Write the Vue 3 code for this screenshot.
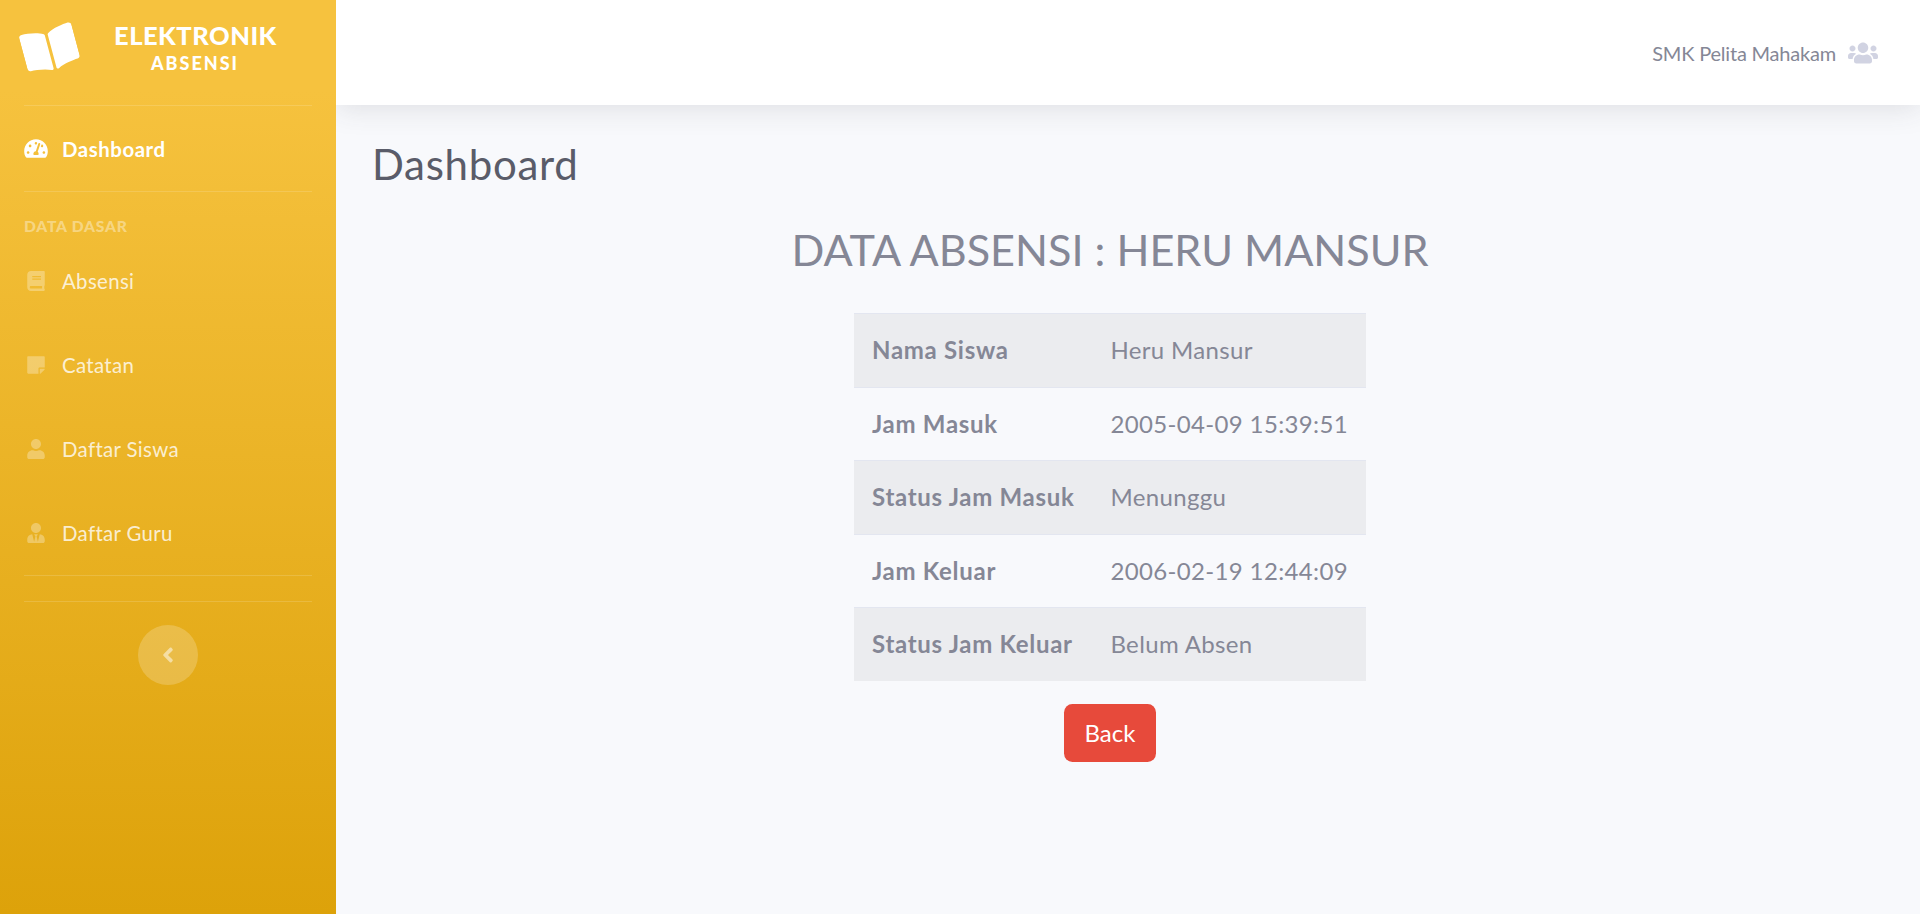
<script setup>
const icons = {
  book: { vb: '0 0 448 512', d: 'M448 360V24c0-13.3-10.7-24-24-24H96C43 0 0 43 0 96v320c0 53 43 96 96 96h328c13.3 0 24-10.7 24-24v-16c0-7.5-3.5-14.3-8.9-18.7-4.2-15.4-4.2-59.3 0-74.7 5.4-4.3 8.9-11.1 8.9-18.6zM128 134c0-3.3 2.7-6 6-6h212c3.3 0 6 2.7 6 6v20c0 3.3-2.7 6-6 6H134c-3.3 0-6-2.7-6-6v-20zm0 64c0-3.3 2.7-6 6-6h212c3.3 0 6 2.7 6 6v20c0 3.3-2.7 6-6 6H134c-3.3 0-6-2.7-6-6v-20zm253.4 250H96c-17.7 0-32-14.3-32-32 0-17.6 14.4-32 32-32h285.4c-1.9 17.1-1.9 46.9 0 64z' },
  note: { vb: '0 0 448 512', d: 'M312 320h136V56c0-13.3-10.7-24-24-24H24C10.7 32 0 42.7 0 56v400c0 13.3 10.7 24 24 24h264V344c0-13.2 10.8-24 24-24zm129 55l-98 98c-4.5 4.5-10.6 7-17 7h-6V352h128v6.1c0 6.3-2.5 12.4-7 16.9z' },
  user: { vb: '0 0 448 512', d: 'M224 256c70.7 0 128-57.3 128-128S294.7 0 224 0 96 57.3 96 128s57.3 128 128 128zm89.6 32h-16.7c-22.2 10.2-46.9 16-72.9 16s-50.6-5.8-72.9-16h-16.7C60.2 288 0 348.2 0 422.4V464c0 26.5 21.5 48 48 48h352c26.5 0 48-21.5 48-48v-41.6c0-74.2-60.2-134.4-134.4-134.4z' },
  tie: { vb: '0 0 448 512', d: 'M224 256c70.7 0 128-57.3 128-128S294.7 0 224 0 96 57.3 96 128s57.3 128 128 128zm95.8 32.6L272 480l-32-136 32-56h-96l32 56-32 136-47.8-191.4C56.9 292 0 350.3 0 422.4V464c0 26.5 21.5 48 48 48h352c26.5 0 48-21.5 48-48v-41.6c0-72.1-56.9-130.4-128.2-133.8z' }
}

const navItems = [
  { label: 'Absensi', icon: icons.book },
  { label: 'Catatan', icon: icons.note },
  { label: 'Daftar Siswa', icon: icons.user },
  { label: 'Daftar Guru', icon: icons.tie }
]

const rows = [
  { label: 'Nama Siswa', value: 'Heru Mansur' },
  { label: 'Jam Masuk', value: '2005-04-09 15:39:51' },
  { label: 'Status Jam Masuk', value: 'Menunggu' },
  { label: 'Jam Keluar', value: '2006-02-19 12:44:09' },
  { label: 'Status Jam Keluar', value: 'Belum Absen' }
]
</script>

<template>
  <div class="wrapper">
    <!-- Sidebar -->
    <aside class="sidebar">
      <div class="brand">
        <svg class="brand-icon" viewBox="0 0 576 512" aria-hidden="true">
          <path fill="currentColor" d="M542.22 32.05c-54.8 3.11-163.72 14.43-230.96 55.59-4.64 2.84-7.27 7.89-7.27 13.17v363.87c0 11.55 12.63 18.85 23.28 13.49 69.18-34.82 169.23-44.32 218.7-46.92 16.89-.89 30.02-14.43 30.02-30.66V62.75c.01-17.71-15.35-31.74-33.77-30.7zM264.73 87.64C197.5 46.48 88.58 35.17 33.78 32.05 15.36 31.01 0 45.04 0 62.75V400.6c0 16.24 13.13 29.78 30.02 30.67 49.49 2.6 149.59 12.11 218.77 46.95 10.62 5.35 23.21-1.94 23.21-13.46V100.63c0-5.29-2.62-10.1-7.27-12.99z"/>
        </svg>
        <div class="brand-text">
          <div class="brand-main">ELEKTRONIK</div>
          <div class="brand-sub">ABSENSI</div>
        </div>
      </div>
      <hr class="divider" />
      <a class="nav-link nav-active">
        <svg class="nav-icon" viewBox="0 0 576 512" aria-hidden="true">
          <path fill="currentColor" d="M288 32C128.94 32 0 160.94 0 320c0 52.8 14.25 102.26 39.06 144.8 5.61 9.62 16.3 15.2 27.44 15.2h443c11.14 0 21.83-5.58 27.44-15.2C561.75 422.26 576 372.8 576 320c0-159.06-128.94-288-288-288zm0 64c14.71 0 26.58 10.13 30.32 23.65-1.11 2.26-2.64 4.23-3.45 6.67l-9.22 27.67c-5.13 3.49-10.97 6.01-17.64 6.01-17.67 0-32-14.33-32-32S270.33 96 288 96zM96 384c-17.67 0-32-14.33-32-32s14.33-32 32-32 32 14.33 32 32-14.33 32-32 32zm48-160c-17.67 0-32-14.33-32-32s14.33-32 32-32 32 14.33 32 32-14.33 32-32 32zm246.77-72.41l-61.33 184C343.13 347.33 352 364.54 352 384c0 11.72-3.38 22.55-8.88 32H232.88c-5.5-9.45-8.88-20.28-8.88-32 0-33.94 26.5-61.43 59.9-63.59l61.34-184.01c4.17-12.56 17.73-19.45 30.36-15.17 12.57 4.19 19.35 17.77 15.17 30.36zm14.66 57.2l15.52-46.55c3.47-1.29 7.13-2.23 11.05-2.23 17.67 0 32 14.33 32 32s-14.33 32-32 32c-11.38-.01-20.89-6.28-26.57-15.22zM480 384c-17.67 0-32-14.33-32-32s14.33-32 32-32 32 14.33 32 32-14.33 32-32 32z"/>
        </svg>
        <span>Dashboard</span>
      </a>
      <hr class="divider" />
      <div class="side-heading">DATA DASAR</div>
      <a v-for="item in navItems" :key="item.label" class="nav-link">
        <svg class="nav-icon nav-icon-dim" :viewBox="item.icon.vb" aria-hidden="true">
          <path fill="currentColor" :d="item.icon.d"/>
        </svg>
        <span>{{ item.label }}</span>
      </a>
      <hr class="divider" />
      <div class="side-gap"></div>
      <hr class="divider" />
      <div class="toggle-row">
        <button class="toggle" aria-label="Toggle sidebar">
          <svg viewBox="0 0 256 512" aria-hidden="true">
            <path fill="currentColor" d="M31.7 239l136-136c9.4-9.4 24.6-9.4 33.9 0l22.6 22.6c9.4 9.4 9.4 24.6 0 33.9L127.9 256l96.4 96.4c9.4 9.4 9.4 24.6 0 33.9L201.7 409c-9.4 9.4-24.6 9.4-33.9 0l-136-136c-9.5-9.4-9.5-24.6-.1-34z"/>
          </svg>
        </button>
      </div>
    </aside>

    <!-- Main -->
    <div class="content">
      <header class="topbar">
        <span class="top-name">SMK Pelita Mahakam</span>
        <svg class="top-icon" viewBox="0 0 640 512" aria-hidden="true">
          <path fill="currentColor" d="M96 224c35.3 0 64-28.7 64-64s-28.7-64-64-64-64 28.7-64 64 28.7 64 64 64zm448 0c35.3 0 64-28.7 64-64s-28.7-64-64-64-64 28.7-64 64 28.7 64 64 64zm32 32h-64c-17.6 0-33.5 7.1-45.1 18.6 40.3 22.1 68.9 62 75.1 109.4h66c17.7 0 32-14.3 32-32v-32c0-35.3-28.7-64-64-64zm-256 0c61.9 0 112-50.1 112-112S381.9 32 320 32 208 82.1 208 144s50.1 112 112 112zm76.8 32h-8.3c-20.8 10-43.9 16-68.5 16s-47.6-6-68.5-16h-8.3C179.6 288 128 339.6 128 403.2V432c0 26.5 21.5 48 48 48h288c26.5 0 48-21.5 48-48v-28.8c0-63.6-51.6-115.2-115.2-115.2zm-223.7-13.4C161.5 263.1 145.6 256 128 256H64c-35.3 0-64 28.7-64 64v32c0 17.7 14.3 32 32 32h65.9c6.3-47.4 34.9-87.3 75.2-109.4z"/>
        </svg>
      </header>

      <main class="page">
        <h1 class="page-title">Dashboard</h1>
        <div class="detail">
          <h2 class="detail-title">DATA ABSENSI : HERU MANSUR</h2>
          <table class="detail-table">
            <tbody>
              <tr v-for="row in rows" :key="row.label">
                <th>{{ row.label }}</th>
                <td>{{ row.value }}</td>
              </tr>
            </tbody>
          </table>
          <button class="btn-back">Back</button>
        </div>
      </main>
    </div>
  </div>
</template>

<style>
html, body { margin: 0; padding: 0; }
</style>

<style scoped>
.wrapper {
  display: flex;
  height: 914px;
  overflow: hidden;
  background: #f8f9fc;
  font-family: Lato, "Open Sans", "Noto Sans", sans-serif;
  color: #858796;
}

/* Sidebar */
.sidebar {
  position: relative;
  z-index: 1;
  width: 336px;
  flex-shrink: 0;
  display: flex;
  flex-direction: column;
  background: linear-gradient(180deg, #f6c23e 10%, #dda20a 100%);
  color: #fff;
}
.brand {
  height: 105px;
  flex-shrink: 0;
  display: flex;
  align-items: flex-start;
  box-sizing: border-box;
  padding: 22px 0 0 23px;
}
.brand-icon {
  width: 54px;
  height: 48px;
  margin-top: 3px;
  transform: rotate(-15deg);
  flex-shrink: 0;
}
.brand-text {
  width: 162px;
  margin-left: 37px;
  text-align: center;
  font-weight: 800;
}
.brand-main {
  font-size: 25.5px;
  line-height: 26px;
  font-weight: 900;
  letter-spacing: 0.5px;
}
.brand-sub {
  font-size: 18px;
  line-height: 22px;
  margin-top: 4px;
  font-weight: 900;
  letter-spacing: 2px;
}
.divider {
  height: 0;
  margin: 0 24px;
  border: 0;
  border-top: 1px solid rgba(255, 255, 255, 0.15);
  flex-shrink: 0;
}
.nav-link {
  height: 84px;
  flex-shrink: 0;
  display: flex;
  align-items: center;
  padding-left: 27px;
  font-size: 20.4px;
  letter-spacing: 0.35px;
  color: rgba(255, 255, 255, 0.8);
}
.nav-active {
  height: 85px;
  padding-left: 24px;
  color: #fff;
  font-weight: 700;
  letter-spacing: 0.55px;
}
.nav-icon {
  width: 18px;
  height: 20px;
  margin-right: 17px;
  flex-shrink: 0;
}
.nav-active .nav-icon {
  width: 24px;
  height: 21px;
  margin-right: 14px;
}
.nav-icon-dim { color: rgba(255, 255, 255, 0.3); }
.side-heading {
  height: 47px;
  flex-shrink: 0;
  box-sizing: border-box;
  padding: 24px 0 0 24px;
  font-size: 15.6px;
  line-height: 20px;
  font-weight: 900;
  letter-spacing: 0.8px;
  color: rgba(255, 255, 255, 0.4);
}
.side-gap { height: 25px; flex-shrink: 0; }
.toggle-row {
  display: flex;
  justify-content: center;
  padding-top: 23px;
}
.toggle {
  width: 60px;
  height: 60px;
  padding: 0;
  display: flex;
  align-items: center;
  justify-content: center;
  border: 0;
  border-radius: 50%;
  background: rgba(255, 255, 255, 0.2);
  color: rgba(255, 255, 255, 0.5);
}
.toggle svg { width: 12px; height: 24px; }

/* Main */
.content {
  flex: 1;
  min-width: 0;
  display: flex;
  flex-direction: column;
}
.topbar {
  height: 105px;
  flex-shrink: 0;
  display: flex;
  align-items: center;
  justify-content: flex-end;
  padding-right: 42px;
  background: #fff;
  box-shadow: 0 0.15rem 1.75rem 0 rgba(58, 59, 69, 0.15);
}
.top-name {
  font-size: 20px;
  letter-spacing: -0.2px;
  color: #858796;
}
.top-icon {
  width: 30px;
  height: 24px;
  margin-left: 12px;
  color: #d1d3e2;
}
.page {
  padding: 0 72px 0 36px;
}
.page-title {
  margin: 32px 0 0;
  font-size: 42px;
  line-height: 54px;
  font-weight: 400;
  letter-spacing: 0.7px;
  color: #5a5c69;
}
.detail {
  display: flex;
  flex-direction: column;
  align-items: center;
}
.detail-title {
  margin: 29px 0 0;
  font-size: 43.2px;
  line-height: 58px;
  font-weight: 400;
  color: #858796;
}
.detail-table {
  width: 511px;
  margin-top: 35px;
  border-collapse: collapse;
  font-size: 24px;
  line-height: 36px;
}
.detail-table th,
.detail-table td {
  padding: 18.25px 18px;
  border-top: 1.5px solid #e3e6f0;
  text-align: left;
  white-space: nowrap;
}
.detail-table th {
  width: 201px;
  font-weight: 700;
  letter-spacing: 0.7px;
}
.detail-table td {
  letter-spacing: 0.35px;
}
.detail-table tr:nth-child(odd) { background: rgba(0, 0, 0, 0.05); }
.btn-back {
  width: 92px;
  height: 58px;
  margin-top: 23px;
  padding: 0;
  border: 0;
  border-radius: 8.4px;
  background: #e74a3b;
  color: #fff;
  font-family: inherit;
  font-size: 24px;
}
</style>
